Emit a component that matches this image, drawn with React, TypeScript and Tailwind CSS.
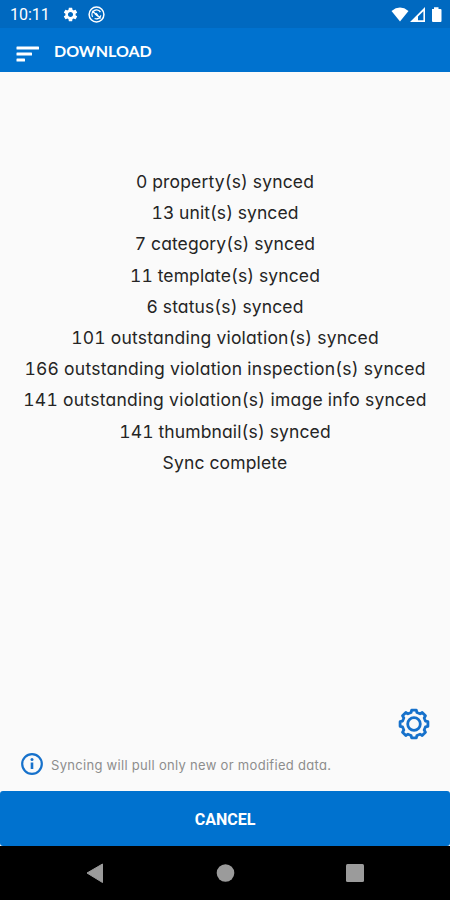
import { MdSettings } from "react-icons/md";

const lines = [
  { text: "0 property(s) synced", spacing: "tracking-[0.15px]" },
  { text: "13 unit(s) synced", spacing: "tracking-[0.05px]" },
  { text: "7 category(s) synced", spacing: "tracking-[0.1px]" },
  { text: "11 template(s) synced", spacing: "tracking-[0.1px]" },
  { text: "6 status(s) synced", spacing: "tracking-[0.12px]" },
  { text: "101 outstanding violation(s) synced", spacing: "tracking-[0.22px]" },
  { text: "166 outstanding violation inspection(s) synced", spacing: "tracking-[0.24px]" },
  { text: "141 outstanding violation(s) image info synced", spacing: "tracking-[0.26px]" },
  { text: "141 thumbnail(s) synced", spacing: "tracking-[0.12px]" },
  { text: "Sync complete", spacing: "tracking-[0.15px]" },
];

// closed outline with eight flat teeth, centred on 16,16
const gearPath = () => {
  const pts: string[] = [];
  for (let i = 0; i < 8; i++) {
    const mid = i * 45 - 90;
    [[-14.5, 11.8], [-9.5, 14.1], [9.5, 14.1], [14.5, 11.8]].forEach(([d, r]) => {
      const a = ((mid + d) * Math.PI) / 180;
      pts.push(`${(16 + r * Math.cos(a)).toFixed(2)} ${(16 + r * Math.sin(a)).toFixed(2)}`);
    });
  }
  return `M${pts.join("L")}Z`;
};

function StatusBar() {
  return (
    <div className="flex h-7 items-center bg-[#0069c0] pl-[10px] pr-[7px] text-white">
      <span className="w-[52px] pt-[2px] font-['Roboto',sans-serif] text-[16px] leading-none">10:11</span>
      <MdSettings className="h-[17px] w-[17px]" />
      <svg className="ml-[9px] h-[17px] w-[17px]" viewBox="0 0 17 17" fill="none" stroke="currentColor">
        <circle cx="8.5" cy="8.5" r="7.4" strokeWidth="1.5" />
        <path d="M4.6 10.8A4.5 4.5 0 0 1 12.4 6.2M12.8 9.3A4.5 4.5 0 0 1 6.6 12.5M4.2 5L12.8 12.2" strokeWidth="1.3" />
        <path d="M6.5 8.2L9.8 11V8.2L8.3 6.8Z" fill="currentColor" stroke="none" />
      </svg>
      <svg className="ml-auto h-[17px] w-[52px]" viewBox="0 0 52 17" fill="currentColor">
        <path d="M0.5 5Q9 -1.8 17.5 5L9 15.5Z" />
        <path fillRule="evenodd" d="M19 16L34 1V16ZM27 14.2H32.4V5.2L27 10.6Z" />
        <path d="M41 3H43V1.2H47.5V3H49.5Q50.5 3 50.5 4V15Q50.5 16 49.5 16H42Q41 16 41 15Z" />
      </svg>
    </div>
  );
}

function AppBar() {
  return (
    <header className="flex h-[44px] items-center bg-[#0072cf] pl-4 text-white">
      <svg className="mt-[7px] h-4 w-[23px]" viewBox="0 0 23 16" fill="currentColor">
        <rect x="0.5" y="0.5" width="22.5" height="3" rx="0.6" />
        <rect x="0.5" y="6.5" width="15.5" height="3" rx="0.6" />
        <rect x="0.5" y="12.5" width="8.5" height="3" rx="0.6" />
      </svg>
      <h1 className="ml-[15px] mt-[1px] font-['Lato',sans-serif] text-[16px] font-bold leading-none">DOWNLOAD</h1>
    </header>
  );
}

function NavBar() {
  return (
    <nav className="h-[54px] bg-black">
      <svg className="h-full w-full" viewBox="0 0 450 54" fill="#9b9b9b">
        <path d="M87 27L102.5 18V36.5Z" stroke="#9b9b9b" strokeLinejoin="round" />
        <circle cx="225.5" cy="27" r="8.8" />
        <rect x="346" y="18" width="18" height="18" rx="1.5" />
      </svg>
    </nav>
  );
}

export default function App() {
  return (
    <div className="flex h-[900px] w-[450px] flex-col overflow-hidden bg-[#fafafa]">
      <StatusBar />
      <AppBar />
      <main className="flex flex-1 flex-col">
        <div className="pt-[94px] text-center font-['Inter',sans-serif] text-[17.5px] leading-[31.2px] text-[#252525] [font-feature-settings:'cv11','tnum']">
          {lines.map((line) => (
            <p key={line.text} className="whitespace-nowrap">
              <span className={line.spacing}>{line.text}</span>
            </p>
          ))}
        </div>
        <div className="mt-auto flex justify-end pr-5">
          <svg className="h-8 w-8" viewBox="0 0 32 32" fill="none" stroke="#1671cb" strokeWidth="2.8" strokeLinejoin="round">
            <path d={gearPath()} />
            <circle cx="16" cy="16" r="6.3" />
          </svg>
        </div>
        <div className="mb-4 mt-[13px] flex items-center pl-[21px]">
          <svg className="h-[22px] w-[22px]" viewBox="0 0 22 22" fill="none" stroke="#1671cb">
            <circle cx="11" cy="11" r="9.8" strokeWidth="2.2" />
            <path d="M11 9.5V16" strokeWidth="2.6" />
            <circle cx="11" cy="6.5" r="1.5" fill="#1671cb" stroke="none" />
          </svg>
          <p className="ml-2 mt-0.5 whitespace-nowrap font-['Inter',sans-serif] text-[13px] leading-none tracking-[0.3px] text-[#8d8d8d] [font-feature-settings:'cv11']">
            Syncing will pull only new or modified data.
          </p>
        </div>
      </main>
      <button className="h-[55px] rounded-[3px] bg-[#0072cf] pt-0.5 font-['Roboto',sans-serif] text-[16px] font-bold text-white">
        CANCEL
      </button>
      <NavBar />
    </div>
  );
}
